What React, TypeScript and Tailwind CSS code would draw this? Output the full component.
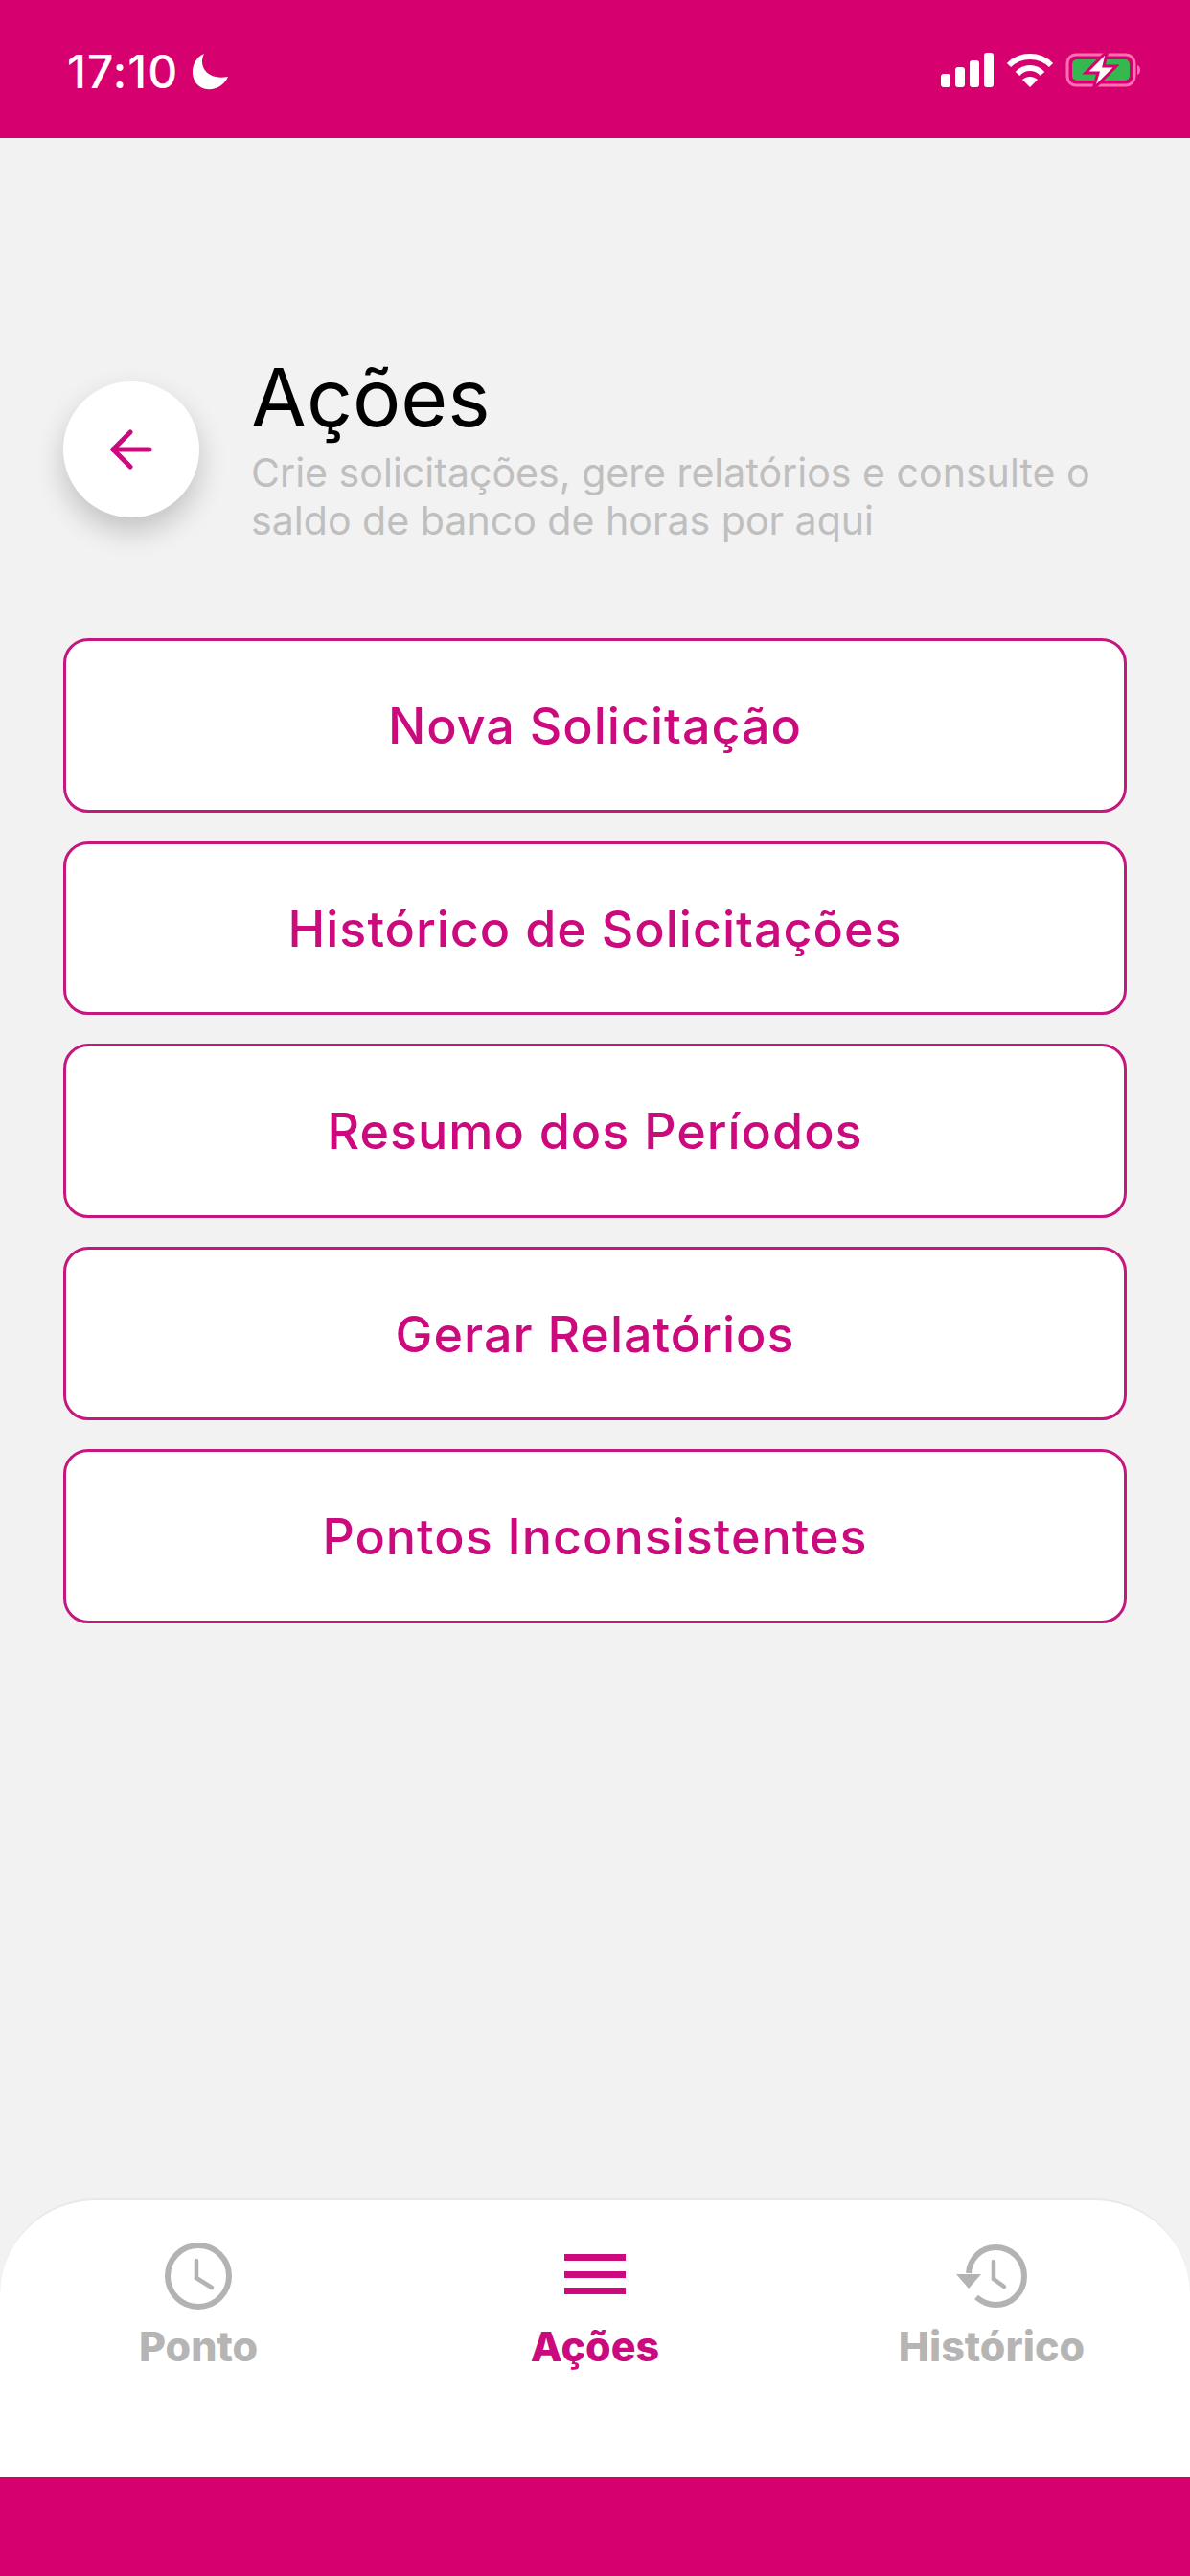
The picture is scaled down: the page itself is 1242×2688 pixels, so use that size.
const PINK = "#d6006f";

function StatusBar() {
  return (
    <div className="flex h-[144px] shrink-0 items-start justify-between bg-[#d6006f] pl-[70px] pr-[48px] pt-[50px]">
      <div className="flex items-center gap-[12px]">
        <span className="font-['Inter'] text-[48px] leading-[50px] font-medium tracking-[1px] text-white">17:10</span>
        <svg width="42" height="42" viewBox="0 0 42 42" fill="#fff">
          <path d="M15 2 C9 14 16 30 40 26 C35 38 20 43 10 36 C-1 28 1 8 15 2Z" />
        </svg>
      </div>
      <div className="flex items-center gap-[12px] pt-[2px]">
        <svg width="58" height="36" viewBox="0 0 58 36" fill="#fff">
          <rect x="2" y="22" width="10" height="14" rx="3" />
          <rect x="17" y="15" width="10" height="21" rx="3" />
          <rect x="32" y="8" width="10" height="28" rx="3" />
          <rect x="47" y="0" width="10" height="36" rx="3" />
        </svg>
        <svg width="50" height="38" viewBox="0 0 50 38" fill="none" stroke="#fff" strokeWidth="6">
          <path d="M3 14 C15 2 35 2 47 14" />
          <path d="M12 23 C19 15 31 15 38 23" />
          <path d="M25 37 L17 29 C22 25 28 25 33 29 Z" fill="#fff" stroke="none" />
        </svg>
        <svg width="82" height="42" viewBox="0 0 82 42">
          <rect x="2" y="5" width="70" height="32" rx="9" fill="none" stroke="#ff6fb5" strokeWidth="3" />
          <rect x="7" y="10" width="60" height="22" rx="5" fill="#34b84f" />
          <path d="M75 16 C79 17 79 25 75 26Z" fill="#ff6fb5" />
          <path d="M44 1 L21 24 H34 L29 41 L53 17 H40 Z" fill="#fff" stroke={PINK} strokeWidth="3" />
        </svg>
      </div>
    </div>
  );
}

function ActionButton({ label }: { label: string }) {
  return (
    <button className="flex h-[181.5px] w-full items-center justify-center rounded-[26px] border-[3px] border-[#c4187f] bg-white pt-[3px] font-['Inter'] text-[52px] font-medium tracking-[1px] text-[#cb0a7e]">
      {label}
    </button>
  );
}

function NavItem({ label, active, icon }: { label: string; active?: boolean; icon: React.ReactNode }) {
  return (
    <div className="flex flex-col items-center">
      <div className="flex h-[74px] items-center justify-center">{icon}</div>
      <span className={active ? "mt-[11px] font-['Inter'] text-[43px] leading-[50px] font-extrabold text-[#cb0a7e]" : "mt-[11px] font-['Inter'] text-[43px] leading-[50px] font-extrabold text-[#b5b5b5]"}>
        {label}
      </span>
    </div>
  );
}

export default function App() {
  const actions = ["Nova Solicitação", "Histórico de Solicitações", "Resumo dos Períodos", "Gerar Relatórios", "Pontos Inconsistentes"];
  return (
    <div className="flex h-[2688px] w-[1242px] flex-col overflow-hidden bg-[#f2f2f2]">
      <StatusBar />
      <main className="flex flex-1 flex-col px-[66px] pt-[216px]">
        <header className="flex items-start gap-[54px]">
          <button className="mt-[38px] flex h-[142px] w-[142px] shrink-0 items-center justify-center rounded-full bg-white shadow-[0_14px_30px_rgba(0,0,0,0.2)]">
            <svg width="46" height="42" viewBox="0 0 46 42" fill="none" stroke="#cb0a7e" strokeWidth="5" strokeLinecap="round" strokeLinejoin="round">
              <path d="M42 21 H4" />
              <path d="M22 3 L4 21 L22 39" />
            </svg>
          </button>
          <div className="flex flex-col pt-[4px]">
            <h1 className="font-['Inter'] text-[84px] leading-[101px] font-normal text-black">Ações</h1>
            <p className="mt-[3px] font-['Inter'] text-[41.1px] leading-[50px] font-normal text-[#bfbfbf]">
              Crie solicitações, gere relatórios e consulte o<br />saldo de banco de horas por aqui
            </p>
          </div>
        </header>
        <div className="mt-[98px] flex flex-col gap-[30px]">
          {actions.map((a) => (
            <ActionButton key={a} label={a} />
          ))}
        </div>
      </main>
      <nav className="grid h-[291px] shrink-0 grid-cols-3 items-start rounded-t-[100px] border-t-2 border-[#e8e8e8] bg-white pt-[42px]">
        <NavItem
          label="Ponto"
          icon={
            <svg width="72" height="72" viewBox="0 0 72 72" fill="none" stroke="#b3b3b3" strokeWidth="6" strokeLinecap="round">
              <circle cx="36" cy="36" r="32" />
              <path d="M34 20 V38 L50 48" strokeWidth="4.5" />
            </svg>
          }
        />
        <NavItem
          active
          label="Ações"
          icon={
            <svg width="66" height="46" viewBox="0 0 66 46" fill="#cb0a7e">
              <rect x="1" y="0" width="64" height="7" />
              <rect x="1" y="18" width="64" height="7" />
              <rect x="1" y="35" width="64" height="7" />
            </svg>
          }
        />
        <NavItem
          label="Histórico"
          icon={
            <svg width="74" height="66" viewBox="0 0 74 66" fill="none" stroke="#b3b3b3" strokeWidth="6" strokeLinecap="round">
              <path d="M13 30 C14 14 27 3 41 3 C58 3 71 16 71 33 C71 50 58 63 41 63 C33 63 27 60 21 55" strokeLinecap="butt" />
              <path d="M0 31 H26 L13 46 Z" fill="#b3b3b3" stroke="none" />
              <path d="M39 18 V36 L50 44" strokeWidth="4.5" />
            </svg>
          }
        />
      </nav>
      <div className="h-[103px] shrink-0 bg-[#d6006f]" />
    </div>
  );
}
